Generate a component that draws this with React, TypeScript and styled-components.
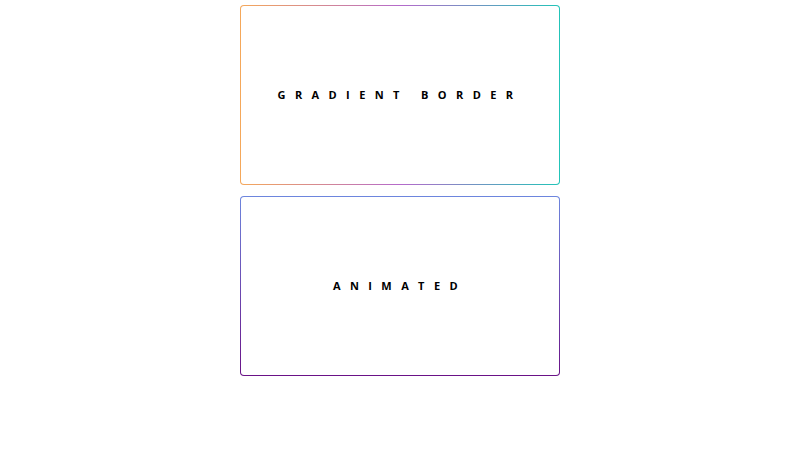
import React from 'react'
import styled, { createGlobalStyle } from 'styled-components'

const GlobalStyle = createGlobalStyle`
  html, body {
    margin: 0;
    padding: 0;
    background: #ffffff;
  }
  * {
    box-sizing: border-box;
  }
`

type CardProps = {
	$gradient: string
}

const Page = styled.div`
  display: flex;
  flex-direction: column;
  align-items: center;
  gap: 11px;
  padding-top: 5px;
  width: 800px;
  height: 450px;
`

const Card = styled.div<CardProps>`
  width: 320px;
  height: 180px;
  display: flex;
  align-items: center;
  justify-content: center;
  border: 1.5px solid transparent;
  border-radius: 4px;
  background: linear-gradient(#ffffff, #ffffff) padding-box, ${p => p.$gradient} border-box;
`

const Label = styled.span`
  font-family: "Open Sans", "Noto Sans", sans-serif;
  font-size: 11px;
  font-weight: 700;
  letter-spacing: 9.4px;
  margin-top: -0.5px;
  color: #000000;
  text-transform: uppercase;
`

const cards = [
	{ text: 'Gradient Border', gradient: 'linear-gradient(90deg, #f5a85a, #b56acb 50%, #22c4b8)' },
	{ text: 'Animated', gradient: 'linear-gradient(180deg, #6d86de, #6a1287)' },
]

const App: React.FC = () => {
	return (
		<>
			<GlobalStyle />
			<Page>
				{cards.map(card => (
					<Card key={card.text} $gradient={card.gradient}>
						<Label>{card.text}</Label>
					</Card>
				))}
			</Page>
		</>
	)
}

export default App
